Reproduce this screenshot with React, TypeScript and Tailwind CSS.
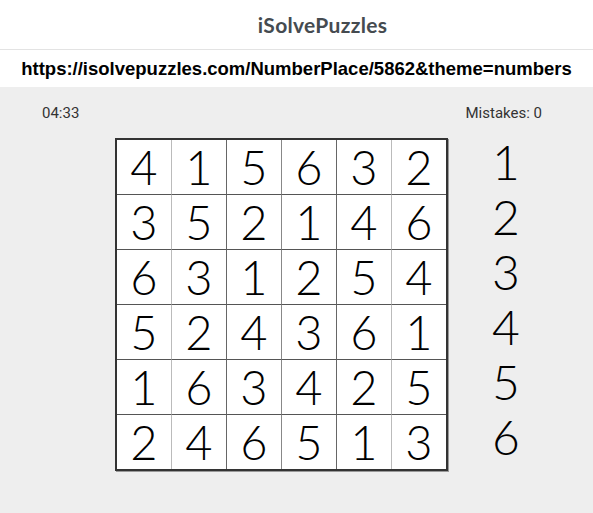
const grid = [
  [4, 1, 5, 6, 3, 2],
  [3, 5, 2, 1, 4, 6],
  [6, 3, 1, 2, 5, 4],
  [5, 2, 4, 3, 6, 1],
  [1, 6, 3, 4, 2, 5],
  [2, 4, 6, 5, 1, 3],
];

// vertical divider colour after each column (light inside, darker elsewhere)
const colLine = ["border-r-[#bbbbbb]", "border-r-[#666666]", "border-r-[#888888]", "border-r-[#666666]", "border-r-[#bbbbbb]", "border-r-0"];

function Cell({ value, row, col }: { value: number; row: number; col: number }) {
  const bottom = row < 5 ? "border-b border-b-[#555555]" : "";
  const right = col < 5 ? `border-r ${colLine[col]}` : "";
  return (
    <div
      className={`flex items-center justify-center bg-white font-['Lato',sans-serif] text-[47px] font-light leading-none text-black ${bottom} ${right}`}
      style={{ width: col === 5 ? 54 : 55, height: row === 5 ? 54 : 55 }}
    >
      <span className="pt-[1px]">{value}</span>
    </div>
  );
}

export default function App() {
  return (
    <div className="flex min-h-[513px] w-[593px] flex-col bg-[#eeeeee] font-['Roboto',sans-serif]">
      <header className="flex h-[50px] items-center justify-center border-b border-[#e3e3e3] bg-white pl-[52px]">
        <h1 className="font-['Lato',sans-serif] text-[21px] font-bold tracking-[0.3px] text-[#454b50]">iSolvePuzzles</h1>
      </header>
      <div className="flex h-[37px] items-center justify-center bg-white pt-[1px]">
        <span className="whitespace-nowrap font-['Liberation_Sans',Arial,sans-serif] text-[18.5px] font-bold text-black">
          https://isolvepuzzles.com/NumberPlace/5862&amp;theme=numbers
        </span>
      </div>
      <div className="flex items-center justify-between pl-[42px] pr-[51px] pt-[15px] text-[15px] text-[#333333]">
        <span>04:33</span>
        <span>Mistakes: 0</span>
      </div>
      <div className="flex items-start pl-[115px] pt-[13px]">
        <div className="border-[2px] border-[#333333] shadow-[1px_1px_0_#999999]">
          {grid.map((r, ri) => (
            <div key={ri} className="flex">
              {r.map((v, ci) => (
                <Cell key={ci} value={v} row={ri} col={ci} />
              ))}
            </div>
          ))}
        </div>
        <div className="ml-[31px] mt-[-3px] flex w-[54px] flex-col">
          {[1, 2, 3, 4, 5, 6].map((n) => (
            <div key={n} className="flex h-[55px] items-center justify-center font-['Lato',sans-serif] text-[48px] font-light leading-none text-black">
              {n}
            </div>
          ))}
        </div>
      </div>
    </div>
  );
}
